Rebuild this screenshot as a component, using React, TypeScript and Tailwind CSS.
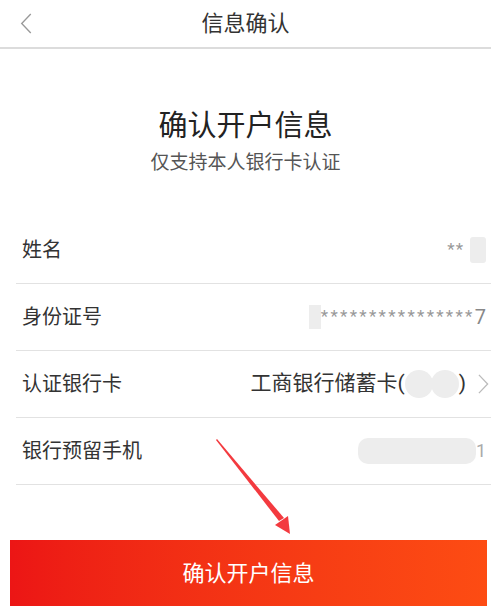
const FONT = 'font-["Roboto","Noto_Sans_CJK_SC",sans-serif]';

type Row = {
  label: string;
  value: React.ReactNode;
  arrow?: boolean;
};

const Mask = ({ className }: { className: string }) => (
  <span className={`inline-block bg-[#ededed] ${className}`} />
);

const Chevron = ({ dir, className }: { dir: 'left' | 'right'; className: string }) => (
  <svg className={className} viewBox="0 0 12 22" fill="none" stroke="currentColor" strokeWidth={1.4}>
    {dir === 'left' ? <polyline points="11,1 1.5,11 11,21" /> : <polyline points="1,1 10.5,11 1,21" />}
  </svg>
);

const rows: Row[] = [
  {
    label: '姓名',
    value: (
      <span className="flex items-center">
        <span className="text-[#999] text-[17px] tracking-[1px]">**</span>
        <Mask className="ml-[6px] h-[26px] w-[16px] rounded-[3px]" />
      </span>
    ),
  },
  {
    label: '身份证号',
    value: (
      <span className="flex items-center">
        <Mask className="h-[24px] w-[12px]" />
        <span className="text-[#999] text-[17px] tracking-[2.3px]">****************</span>
        <span className="text-[#888] text-[20px] leading-none">7</span>
      </span>
    ),
  },
  {
    label: '认证银行卡',
    arrow: true,
    value: (
      <span className="flex items-center text-[21px] text-[#333]">
        工商银行储蓄卡(
        <span className="flex">
          <Mask className="h-[28px] w-[28px] rounded-full" />
          <Mask className="-ml-[2px] h-[28px] w-[28px] rounded-full" />
        </span>
        )
      </span>
    ),
  },
  {
    label: '银行预留手机',
    value: (
      <span className="flex items-center">
        <Mask className="h-[26px] w-[118px] rounded-[10px]" />
        <span className="text-[#aaa] text-[18px] leading-none">1</span>
      </span>
    ),
  },
];

const App = () => {
  return (
    <div className={`relative h-[606px] w-[491px] overflow-hidden bg-white ${FONT}`}>
      <header className="grid h-[49px] grid-cols-[48px_1fr_48px] items-center border-b-[2px] border-[#dcdcdc]">
        <Chevron dir="left" className="ml-[20px] h-[21px] w-[12px] text-[#999]" />
        <h1 className="text-center text-[22px] text-[#333]">信息确认</h1>
        <span />
      </header>

      <div className="flex flex-col items-center pt-[59px]">
        <h2 className="text-[29px] leading-[36px] text-[#222]">确认开户信息</h2>
        <p className="mt-[6px] text-[19px] leading-[26px] text-[#555]">仅支持本人银行卡认证</p>
      </div>

      <div className="ml-4 mt-[41px]">
        {rows.map(row => (
          <div
            key={row.label}
            className="flex h-[67px] items-center justify-between border-b border-[#e2e2e2] pl-[6px] pr-[5px]"
          >
            <span className="text-[20px] text-[#333]">{row.label}</span>
            <span className="flex items-center">
              {row.value}
              {row.arrow && <Chevron dir="right" className="-mr-[3px] ml-[12px] h-[22px] w-[11px] text-[#bbb]" />}
            </span>
          </div>
        ))}
      </div>

      <div className="ml-[10px] mr-[4px] mt-[55px]">
        <button className="flex h-[66px] w-full items-center justify-center bg-gradient-to-r from-[#ec1515] to-[#fd4c13] text-[22px] text-white">
          确认开户信息
        </button>
      </div>

      {/* red annotation arrow */}
      <svg className="pointer-events-none absolute left-0 top-0" width="491" height="606" viewBox="0 0 491 606">
        <polygon points="217,439 284,518 279,521 216,440" fill="#f33a3f" />
        <polygon points="275,525 288,516 290,534" fill="#f33a3f" />
      </svg>
    </div>
  );
};

export default App;
